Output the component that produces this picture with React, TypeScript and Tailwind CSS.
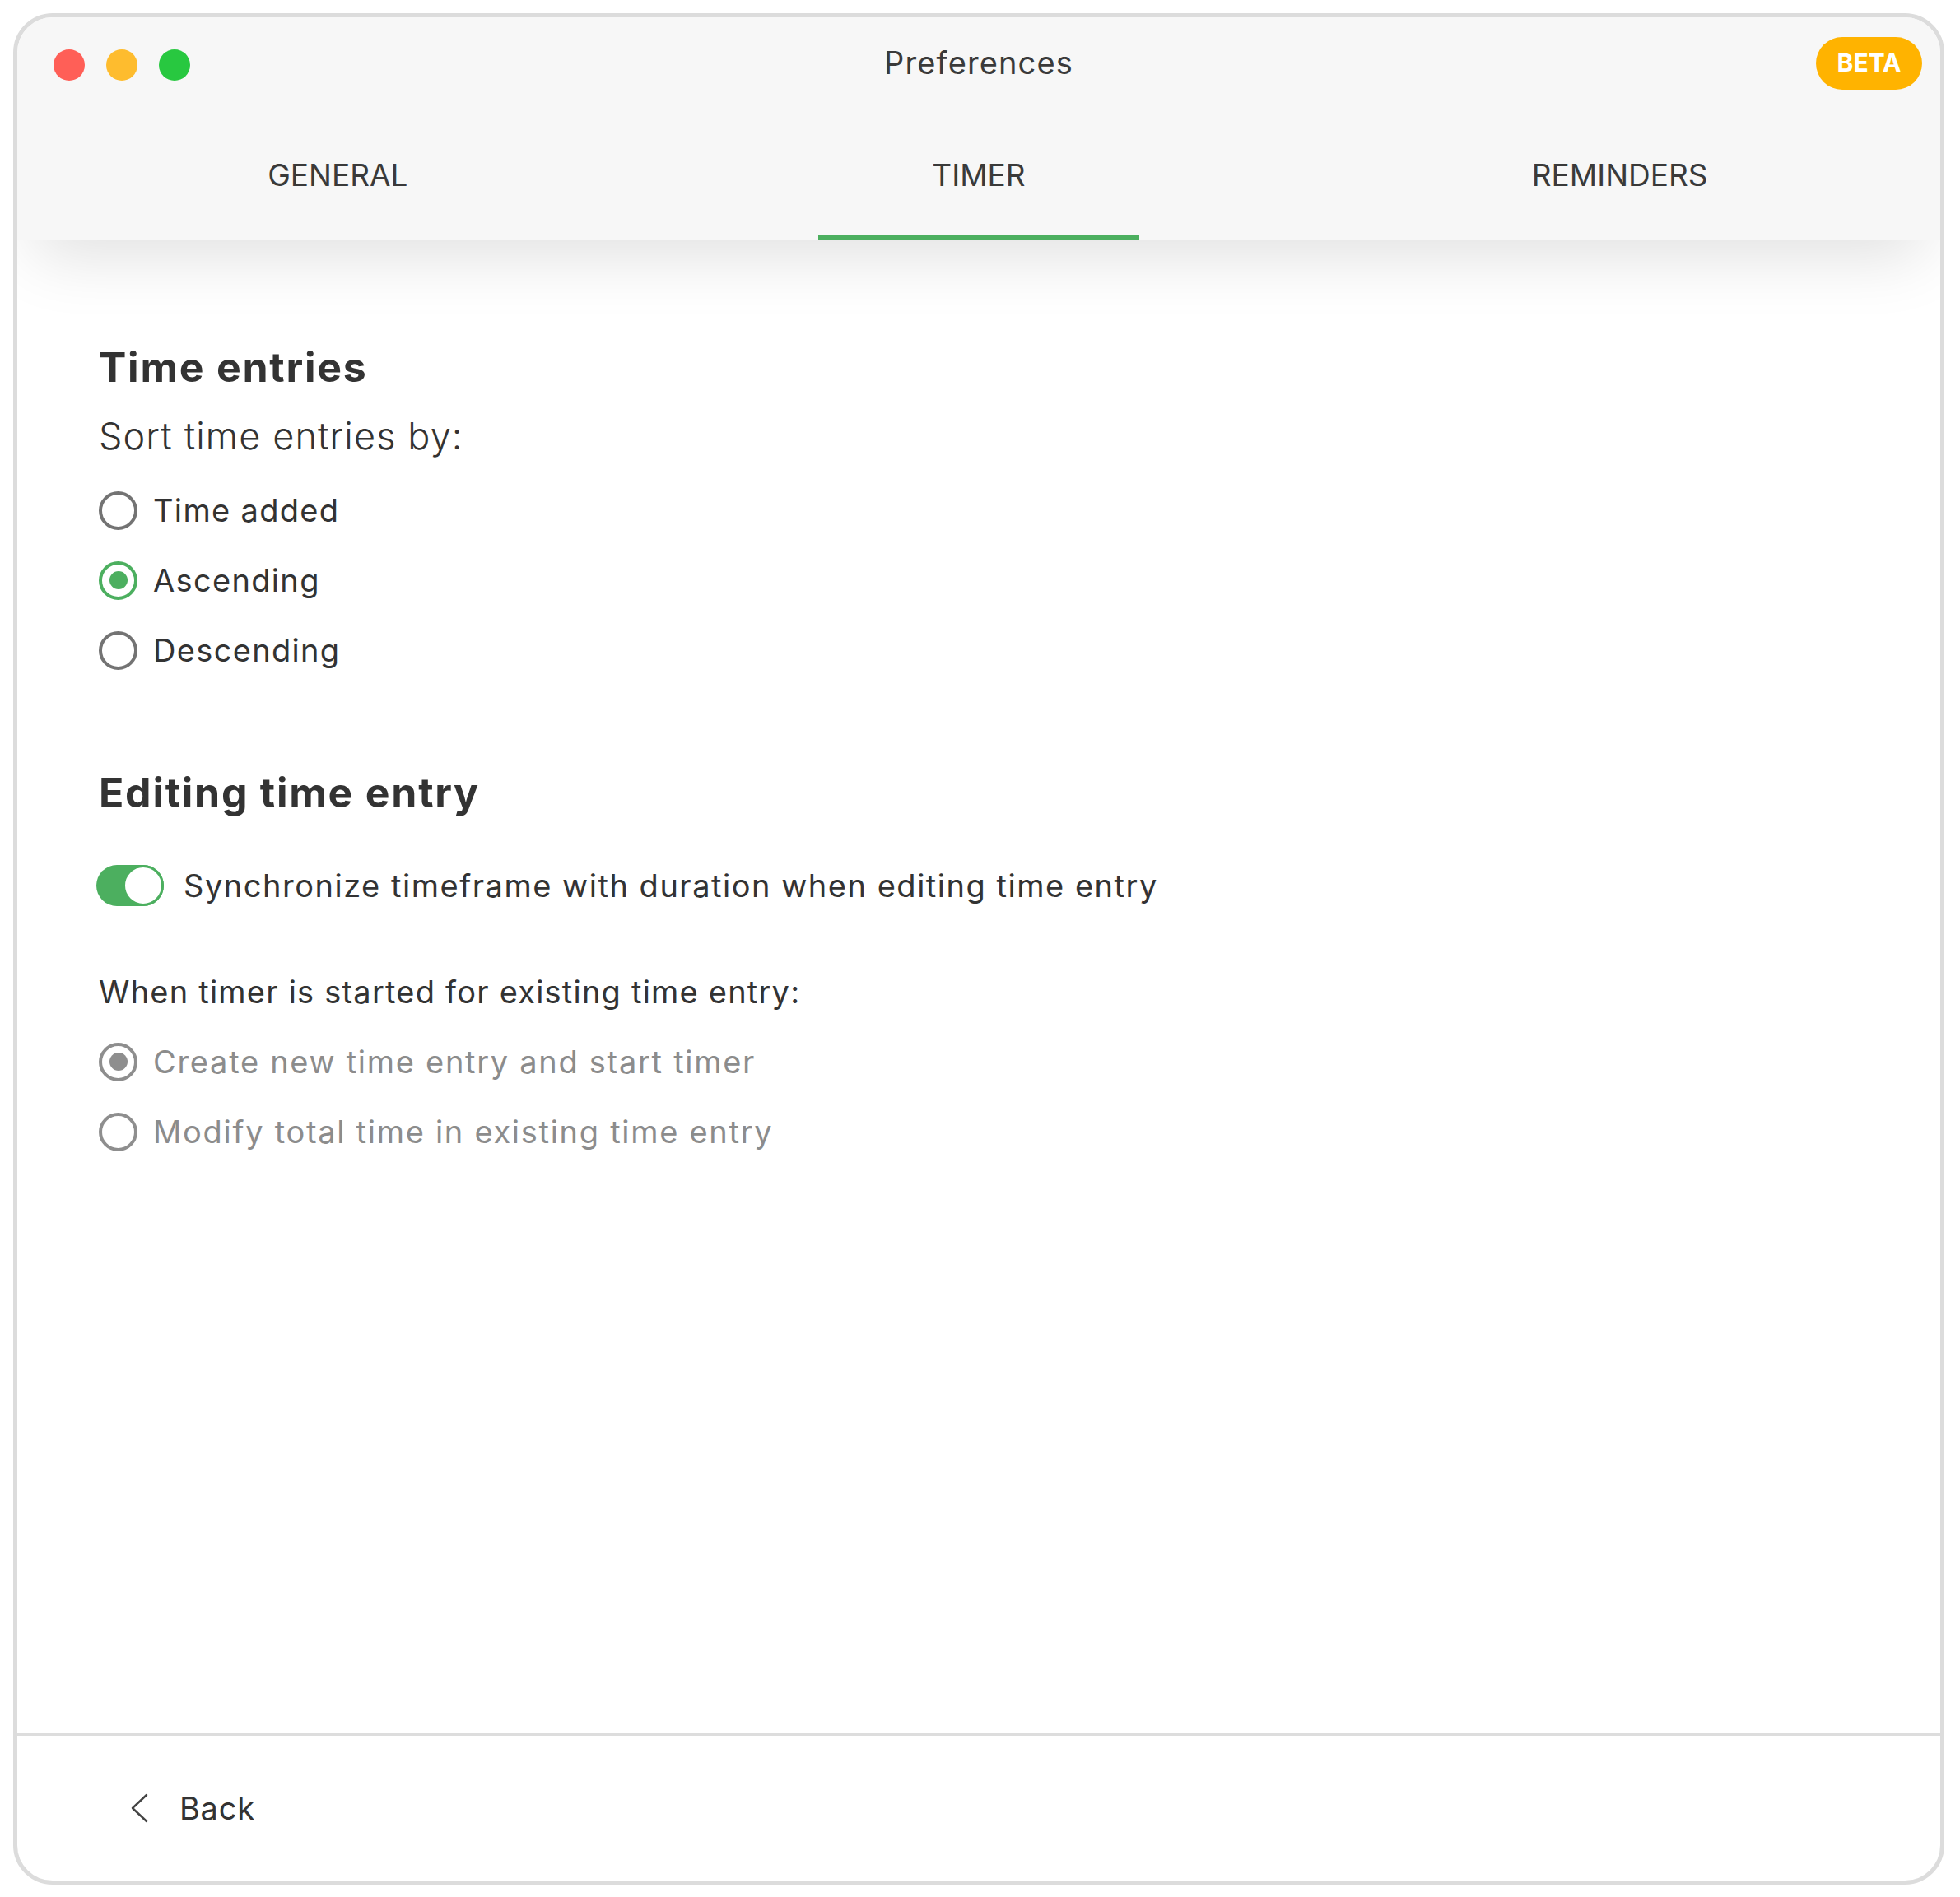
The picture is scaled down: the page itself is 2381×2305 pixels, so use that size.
import { useState } from "react"

type RadioProps = {
  label: string
  checked?: boolean
  disabled?: boolean
  onSelect?: () => void
}

function Radio({ label, checked, disabled, onSelect }: RadioProps) {
  const ring = disabled ? "border-[#8e8e8e]" : checked ? "border-[#4caf5f]" : "border-[#737373]"
  const dot = disabled ? "bg-[#8e8e8e]" : "bg-[#4caf5f]"
  return (
    <button type="button" onClick={onSelect} className="flex h-[60px] items-center gap-[19px] text-left">
      <span className={`flex h-[47px] w-[47px] items-center justify-center rounded-full border-[4px] ${ring}`}>
        {checked && <span className={`h-[22px] w-[22px] rounded-full ${dot}`} />}
      </span>
      <span
        className={`text-[38px] leading-[60px] ${disabled ? "tracking-[0.045em] text-[#8c8c8c]" : "tracking-[0.035em] text-[#333333]"}`}
      >
        {label}
      </span>
    </button>
  )
}

const tabs = ["GENERAL", "TIMER", "REMINDERS"]
const sortOptions = ["Time added", "Ascending", "Descending"]

export default function App() {
  const [activeTab, setActiveTab] = useState("TIMER")
  const [sortBy, setSortBy] = useState("Ascending")
  const [sync, setSync] = useState(true)

  return (
    <div className="min-h-screen bg-white pl-[16px] pt-[16px] font-[Inter,sans-serif] text-[#333333]">
      <div className="flex h-[2274px] w-[2346px] flex-col overflow-hidden rounded-[48px] border-[5px] border-[#dcdcdc] bg-white">
        {/* header */}
        <div className="relative z-10 bg-[#f7f7f7] shadow-[0_40px_80px_-20px_rgba(0,0,0,0.12)]">
          <div className="grid h-[112px] grid-cols-[1fr_auto_1fr] items-center border-b border-[#efefef] px-[22px]">
            <div className="flex items-center gap-[26px] pl-[22px] pt-[4px]">
              <span className="h-[38px] w-[38px] rounded-full bg-[#ff5f57]" />
              <span className="h-[38px] w-[38px] rounded-full bg-[#febc2e]" />
              <span className="h-[38px] w-[38px] rounded-full bg-[#28c840]" />
            </div>
            <div className="text-[38px] tracking-[0.03em] text-[#3a3a3a]">Preferences</div>
            <div className="flex justify-end">
              <span className="flex h-[64px] w-[129px] items-center justify-center rounded-full bg-[#ffb300] text-[30px] font-bold text-white">
                BETA
              </span>
            </div>
          </div>
          <div className="grid h-[159px] grid-cols-3">
            {tabs.map((tab) => (
              <button
                key={tab}
                type="button"
                onClick={() => setActiveTab(tab)}
                className="flex h-full flex-col items-center"
              >
                <span className="flex flex-1 items-center pt-[6px] text-[37px] text-[#3a3a3a]">{tab}</span>
                <span className={`h-[6px] w-1/2 ${activeTab === tab ? "bg-[#4caf5f]" : "bg-transparent"}`} />
              </button>
            ))}
          </div>
        </div>

        {/* content */}
        <div className="flex-1 pl-[99px] pt-[124px]">
          <h2 className="text-[50px] font-bold leading-[60px] tracking-[0.035em] text-[#333333]">Time entries</h2>
          <p className="mt-[24px] text-[45px] font-light leading-[60px] tracking-[0.025em] text-[#333333]">
            Sort time entries by:
          </p>
          <div className="mt-[30px] flex flex-col gap-[25px]">
            {sortOptions.map((opt) => (
              <Radio key={opt} label={opt} checked={sortBy === opt} onSelect={() => setSortBy(opt)} />
            ))}
          </div>

          <h2 className="mt-[113px] text-[50px] font-bold leading-[60px] tracking-[0.035em] text-[#333333]">
            Editing time entry
          </h2>
          <div className="-ml-[3px] mt-[53px] flex h-[60px] items-center gap-[24px]">
            <button
              type="button"
              onClick={() => setSync(!sync)}
              className={`flex h-[50px] w-[82px] items-center rounded-full ${sync ? "justify-end bg-[#4caf5f]" : "justify-start bg-[#cccccc]"}`}
            >
              <span
                className={`h-[50px] w-[50px] rounded-full border-[3px] bg-white ${sync ? "border-[#4caf5f]" : "border-[#cccccc]"}`}
              />
            </button>
            <span className="text-[38px] leading-[60px] tracking-[0.04em]">
              Synchronize timeframe with duration when editing time entry
            </span>
          </div>

          <p className="mt-[69px] text-[38px] leading-[60px] tracking-[0.032em]">
            When timer is started for existing time entry:
          </p>
          <div className="mt-[25px] flex flex-col gap-[25px]">
            <Radio label="Create new time entry and start timer" checked disabled />
            <Radio label="Modify total time in existing time entry" disabled />
          </div>
        </div>

        {/* footer */}
        <div className="flex h-[179px] items-center border-t-[3px] border-[#dddddd] pl-[137px]">
          <button type="button" className="flex items-center gap-[38px]">
            <svg width="22" height="36" viewBox="0 0 22 36" fill="none">
              <polyline
                points="20,2 3,18 20,34"
                stroke="#444444"
                strokeWidth="2.5"
                strokeLinecap="round"
                strokeLinejoin="round"
              />
            </svg>
            <span className="text-[38px] tracking-[0.02em] text-[#333333]">Back</span>
          </button>
        </div>
      </div>
    </div>
  )
}
